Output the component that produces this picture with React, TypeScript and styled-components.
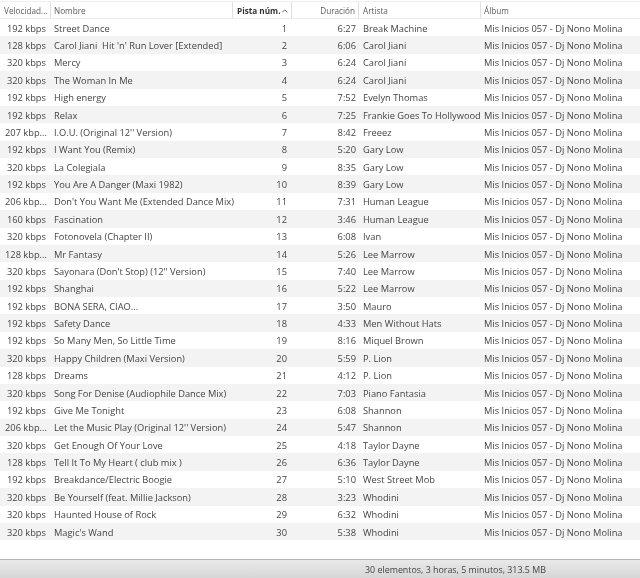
import React from "react";
import styled, { createGlobalStyle } from "styled-components";

const GlobalStyle = createGlobalStyle`
  html, body {
    margin: 0;
    padding: 0;
    background: #ffffff;
  }
`;

const COLUMNS = "51px 182px 59px 67px 122px 1fr";

const Window = styled.div`
  width: 640px;
  height: 578px;
  display: flex;
  flex-direction: column;
  overflow: hidden;
  font-family: "Open Sans", "Noto Sans", sans-serif;
  font-size: 9.3px;
  color: #444444;
  filter: blur(0.35px);
`;

const Header = styled.div`
  display: grid;
  grid-template-columns: ${COLUMNS};
  height: 18px;
  margin-top: 1px;
  border-top: 1px solid #f0f0f0;
  border-bottom: 1px solid #ececec;
  box-sizing: border-box;
  color: #5c5c5c;
  font-size: 8.2px;
`;

const HeaderCell = styled.div<{ $right?: boolean; $sorted?: boolean; $pad?: number }>`
  display: flex;
  align-items: center;
  justify-content: ${({ $right }) => ($right ? "flex-end" : "flex-start")};
  gap: 2px;
  padding: 1px 3px 0 ${({ $pad }) => $pad ?? 4}px;
  border-right: 1px solid #e0e0e0;
  box-sizing: border-box;
  white-space: nowrap;
  font-weight: ${({ $sorted }) => ($sorted ? 700 : 400)};
  color: ${({ $sorted }) => ($sorted ? "#333333" : "inherit")};

  &:last-child {
    border-right: 0;
  }
`;

const Body = styled.div`
  flex: 1;
`;

const Row = styled.div<{ $even: boolean }>`
  display: grid;
  grid-template-columns: ${COLUMNS};
  height: 17.38px;
  align-items: center;
  background: ${({ $even }) => ($even ? "#f3f3f3" : "#ffffff")};
`;

const Cell = styled.div<{ $align?: "left" | "right"; $pad?: number }>`
  padding: 1px ${({ $pad }) => $pad ?? 4}px 0 ${({ $pad }) => $pad ?? 4}px;
  text-align: ${({ $align }) => $align ?? "left"};
  white-space: pre;
`;

const StatusBar = styled.div`
  height: 19px;
  box-sizing: border-box;
  display: flex;
  align-items: center;
  padding-left: 365px;
  border-top: 1px solid #b4b4b4;
  background: linear-gradient(#e9e9e9, #d6d6d6);
  color: #444444;
  font-size: 8.9px;
`;

type Track = [string, string, string, string];

const ALBUM = "Mis Inicios 057 - Dj Nono Molina";

const tracks: Track[] = [
  ["192 kbps", "Street Dance", "6:27", "Break Machine"],
  ["128 kbps", "Carol Jiani  Hit 'n' Run Lover [Extended]", "6:06", "Carol Jiani"],
  ["320 kbps", "Mercy", "6:24", "Carol Jiani"],
  ["320 kbps", "The Woman In Me", "6:24", "Carol Jiani"],
  ["192 kbps", "High energy", "7:52", "Evelyn Thomas"],
  ["192 kbps", "Relax", "7:25", "Frankie Goes To Hollywood"],
  ["207 kbp...", "I.O.U. (Original 12'' Version)", "8:42", "Freeez"],
  ["192 kbps", "I Want You (Remix)", "5:20", "Gary Low"],
  ["320 kbps", "La Colegiala", "8:35", "Gary Low"],
  ["192 kbps", "You Are A Danger (Maxi 1982)", "8:39", "Gary Low"],
  ["206 kbp...", "Don't You Want Me (Extended Dance Mix)", "7:31", "Human League"],
  ["160 kbps", "Fascination", "3:46", "Human League"],
  ["320 kbps", "Fotonovela (Chapter II)", "6:08", "Ivan"],
  ["128 kbp...", "Mr Fantasy", "5:26", "Lee Marrow"],
  ["320 kbps", "Sayonara (Don't Stop) (12'' Version)", "7:40", "Lee Marrow"],
  ["192 kbps", "Shanghai", "5:22", "Lee Marrow"],
  ["192 kbps", "BONA SERA, CIAO...", "3:50", "Mauro"],
  ["192 kbps", "Safety Dance", "4:33", "Men Without Hats"],
  ["192 kbps", "So Many Men, So Little Time", "8:16", "Miquel Brown"],
  ["320 kbps", "Happy Children (Maxi Version)", "5:59", "P. Lion"],
  ["128 kbps", "Dreams", "4:12", "P. Lion"],
  ["320 kbps", "Song For Denise (Audiophile Dance Mix)", "7:03", "Piano Fantasia"],
  ["192 kbps", "Give Me Tonight", "6:08", "Shannon"],
  ["206 kbp...", "Let the Music Play (Original 12'' Version)", "5:47", "Shannon"],
  ["320 kbps", "Get Enough Of Your Love", "4:18", "Taylor Dayne"],
  ["128 kbps", "Tell It To My Heart ( club mix )", "6:36", "Taylor Dayne"],
  ["192 kbps", "Breakdance/Electric Boogie", "5:10", "West Street Mob"],
  ["320 kbps", "Be Yourself (feat. Millie Jackson)", "3:23", "Whodini"],
  ["320 kbps", "Haunted House of Rock", "6:32", "Whodini"],
  ["320 kbps", "Magic's Wand", "5:38", "Whodini"],
];

const SortCaret: React.FC = () => (
  <svg width="6" height="4" viewBox="0 0 6 4" fill="none" stroke="#555555" strokeWidth="1">
    <path d="M0.3 3.5 L3 0.7 L5.7 3.5" />
  </svg>
);

const App: React.FC = () => (
  <Window>
    <GlobalStyle />
    <Header>
      <HeaderCell>Velocidad...</HeaderCell>
      <HeaderCell $pad={3}>Nombre</HeaderCell>
      <HeaderCell $sorted>
        Pista núm.
        <SortCaret />
      </HeaderCell>
      <HeaderCell $right>Duración</HeaderCell>
      <HeaderCell>Artista</HeaderCell>
      <HeaderCell $pad={3}>Álbum</HeaderCell>
    </Header>
    <Body>
      {tracks.map(([bitrate, name, time, artist], i) => (
        <Row key={name} $even={i % 2 === 1}>
          <Cell $align="right" $pad={5}>{bitrate}</Cell>
          <Cell $pad={3}>{name}</Cell>
          <Cell $align="right" $pad={5}>{i + 1}</Cell>
          <Cell $align="right" $pad={3}>{time}</Cell>
          <Cell>{artist}</Cell>
          <Cell $pad={3}>{ALBUM}</Cell>
        </Row>
      ))}
    </Body>
    <StatusBar>30 elementos, 3 horas, 5 minutos, 313.5 MB</StatusBar>
  </Window>
);

export default App;
